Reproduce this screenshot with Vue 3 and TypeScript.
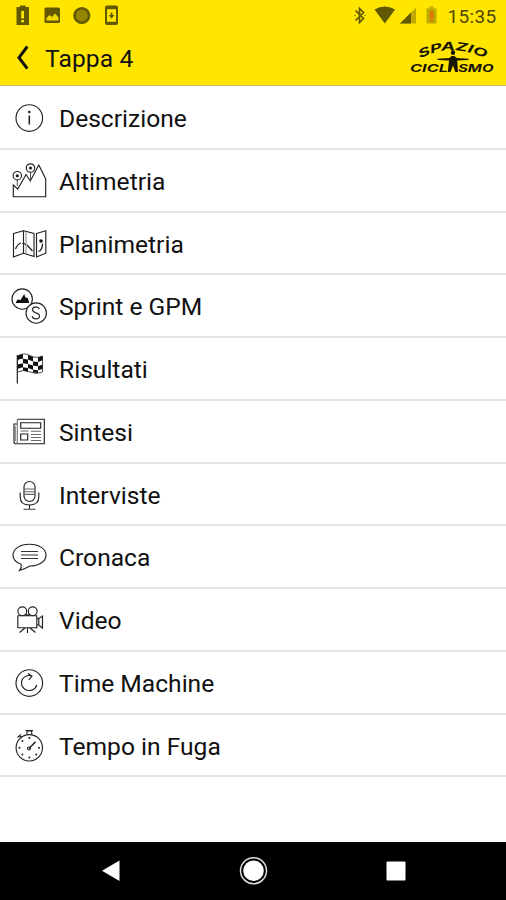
<script setup lang="ts">
interface Item {
  icon: string
  label: string
}

const items: Item[] = [
  { icon: 'info', label: 'Descrizione' },
  { icon: 'altitude', label: 'Altimetria' },
  { icon: 'map', label: 'Planimetria' },
  { icon: 'sprint', label: 'Sprint e GPM' },
  { icon: 'flag', label: 'Risultati' },
  { icon: 'news', label: 'Sintesi' },
  { icon: 'mic', label: 'Interviste' },
  { icon: 'chat', label: 'Cronaca' },
  { icon: 'video', label: 'Video' },
  { icon: 'replay', label: 'Time Machine' },
  { icon: 'stopwatch', label: 'Tempo in Fuga' },
]
</script>

<template>
  <div class="screen">
    <header class="header">
      <div class="status">
        <svg class="status-left" width="130" height="32" viewBox="0 0 130 32">
          <path class="dark" fill-rule="evenodd" d="M16.500 7H20V5.500h5.500V7H29v18H16.500zM21.200 11v7.500h2.800V11zM21.200 20v2.200h2.800V20z" />
          <rect class="dark" x="44.500" y="7.500" width="15.500" height="15.500" rx="1.500" />
          <path class="hole" d="M46.500 20.500v-2.500l3-3 2.500 2 3-3.500 3.500 4v3z" />
          <circle class="ring" cx="81.800" cy="15.500" r="7.300" />
          <path class="dark" fill-rule="evenodd" d="M107 5.500h9q2 0 2 2v15.500q0 2-2 2h-9q-2 0-2-2V7.500q0-2 2-2zM107 9.200v12.600h9V9.200z" />
          <path class="dark" d="M110.800 12.500h1.600v2.500h2.200l-3 3.500-3-3.500h2.200z" />
        </svg>
        <svg class="status-right" width="102" height="32" viewBox="0 0 102 32">
          <path class="bluetooth" d="M11.500 10.500l8 8-4 4V8.500l4 4-8 8M10.500 15.500h1M20.500 15.500h1" />
          <path class="dark" d="M30.500 9.500q10.300-6 20.600 0L40.800 23.500z" />
          <path class="faint" d="M72 7.500V23.500H56z" />
          <path class="dark" d="M67 12.500v11H56z" />
          <path class="faint" d="M82.500 8.500h3V6.500h4v2h3V23.500H82.500z" />
          <path class="alert" d="M86.200 11h3v7h-3zM86.200 19.200h3v2.300h-3z" />
        </svg>
        <span class="clock">15:35</span>
      </div>
      <div class="toolbar">
        <svg class="back" width="32" height="54" viewBox="0 0 32 54">
          <path d="M27.300 14.500L19 25.700l8.300 11" />
        </svg>
        <h1>Tappa 4</h1>
        <svg class="logo" width="106" height="54" viewBox="0 0 106 54">
          <defs><path id="arc" d="M20 24.500Q52 7.500 87 25.500" /></defs>
          <text class="arc-text"><textPath href="#arc" textLength="68" lengthAdjust="spacingAndGlyphs">SPAZIO</textPath></text>
          <text x="10" y="38" textLength="38" lengthAdjust="spacingAndGlyphs">CICL</text>
          <text x="58" y="38" textLength="35.500" lengthAdjust="spacingAndGlyphs">SMO</text>
          <path d="M50.800 18.500a2.200 2.500 0 1 1 4.400 0 2.200 2.500 0 0 1-4.400 0zM37.500 24.800l12-.8 2-2h3l2 2 12 .8v1.200l-11.300.4L58 38h-2.700l-2.300-6.500L50.500 38h-2.700l1.200-11.600-11.500-.4z" />
        </svg>
      </div>
    </header>

    <ul class="list">
      <li v-for="item in items" :key="item.icon">
        <svg class="icon" width="59" height="62" viewBox="0 0 59 62">
          <g v-if="item.icon === 'info'">
            <circle cx="29.300" cy="31" r="13.300" />
            <path d="M29.300 28.500v9" stroke-width="1.600" />
            <circle class="solid" cx="29.300" cy="25" r="1.200" />
          </g>
          <g v-else-if="item.icon === 'altitude'">
            <path d="M13.300 46.700V35l4.500 4 8.200-14.500 4.300 6.500 8.500-16L45.700 29v17.700z" />
            <path d="M17.300 30v6M30.500 22.500v7" stroke-width=".8" />
            <circle cx="17.300" cy="25.700" r="4.200" />
            <circle cx="30.500" cy="18" r="4.200" />
            <circle class="solid" cx="17.300" cy="25.700" r="1.500" />
            <circle class="solid" cx="30.500" cy="18" r="1.500" />
          </g>
          <g v-else-if="item.icon === 'map'">
            <path d="M13.500 20.500l10-2.800v22.500l-10 3.800zM23.500 17.700L34 20.500v23l-10.500-3.300M36.500 20.500l9.300-2.800v22.500L36.500 44zM34 20.500V43" />
            <path d="M26 19v21" stroke="#999" />
            <path d="M15.500 36q2-5 5.500-6M22.500 30l3.500 1.500M27 32l5.500 6M38.500 38.500q4-1.500 4-8" stroke-width="1.300" />
            <circle class="solid" cx="41" cy="28" r="1.800" />
          </g>
          <g v-else-if="item.icon === 'sprint'">
            <circle cx="22.200" cy="24" r="10.200" />
            <path class="solid" d="M15.500 28l2-3.500 3 .5 3.700-6 1.300 3.500 2.300.5 1.500 5z" />
            <circle class="white" cx="36.200" cy="38" r="10.200" />
            <path d="M39.500 34q-1-2.200-3.500-2.200c-4.600 0-4.300 4.700-.7 5.800 5.500 1.400 5.500 6.300.8 6.300q-3.300 0-4-2.800" />
          </g>
          <g v-else-if="item.icon === 'flag'">
            <path d="M17.300 17v28.500" stroke-width="1.200" />
            <path d="M17.500 18q6-4 12.500-.5T42.500 18v16q-6 3-12.500 0t-12.500 0z" stroke-width=".8" />
            <path class="solid" d="M17.500 18q3-2 5.500-1.800v4.600q-3 0-5.500 1.400zM28 17l5 2v4.500l-5-2zM38 19.500l4.500-1.500v4.200L38 24zM23 20.800l5 .7v4.500l-5-.8zM33 23.500l5 .5v4.300l-5-.7zM17.500 26.500l5.500-1.300v4l-5.500 1.500zM28 26l5 1.600v4.200l-5-1.800zM38 28.300l4.500-1.800V31L38 32.300zM23 29.200l5 .8v3.500l-5-1zM33 31.800l5 .5V35l-5-.4z" />
          </g>
          <g v-else-if="item.icon === 'news'">
            <path d="M17.300 18.200h27v24.500H16q-2 0-2-2V23h3.300" />
            <path d="M17.300 18.200v22q0 2.500-2 2.500M15.200 25v15" stroke="#777" />
            <path d="M20.700 21.700h20v5.500h-20zM20.700 33h7v6h-7z" />
            <path d="M20.500 30h8M31 30.200h10M31 33.500h10M31 36.500h10M31 39.500h10" stroke="#666" />
          </g>
          <g v-else-if="item.icon === 'mic'">
            <rect x="24" y="17.500" width="11" height="20" rx="5.500" />
            <path d="M20.200 28.500v4.500q0 8 9.300 8t9.300-8v-4.500M29.500 41v4" />
            <path d="M24 25h11M24 27.700h11M24 30.400h11M23.500 45.300h12" stroke="#666" />
          </g>
          <g v-else-if="item.icon === 'chat'">
            <path d="M19.500 43.500q2.500-3 1.700-6.200C15.700 35.500 13 32 13 28.300 13 22 20 17.200 29.500 17.200S46 22 46 28.300 38.500 39 30 39q-4.500 2.500-10.500 4.500z" />
            <path d="M21 24.500h17M21 28h17M21 31.500h17" stroke="#333" />
          </g>
          <g v-else-if="item.icon === 'video'">
            <circle cx="22.300" cy="22.300" r="4.400" />
            <circle cx="32.700" cy="22.300" r="4.400" />
            <path d="M17.800 26.700h19v12h-19zM36.800 30l2-.5v6.500l-2-.5M38.800 29.500l3.700-2.500v12l-3.700-2.800M25 39l-5.500 4.500M27.500 39v5M30 39l5.500 4.500M25.500 25l2 1.500 2-1.500" />
          </g>
          <g v-else-if="item.icon === 'replay'">
            <circle cx="29.300" cy="31" r="13.300" />
            <path d="M31.500 24q-2-.8-4.200-.2c-7 2-7.500 10-2.300 13.400 4.500 2.800 10.500.7 11.700-4.200" />
            <path d="M28 21.500l4 2.700-3.200 3.600" />
          </g>
          <g v-else>
            <circle cx="29.300" cy="32.800" r="13.200" />
            <path d="M27 19.500V16h4.700v3.500M25.500 15.500h7.500M17.500 22.500l3.500-3.200M19.500 20.500l2.200 2.500" />
            <path d="M29 33.500l6.500-6.800" stroke-width="1.500" />
            <circle cx="29" cy="33.500" r="1.500" />
            <path class="ticks" d="M29.300 23h.01M29.300 42.500h.01M19.500 32.800h.01M39 32.800h.01M22.400 26h.01M22.400 39.600h.01M36.200 39.600h.01" />
          </g>
        </svg>
        <span>{{ item.label }}</span>
      </li>
    </ul>

    <nav class="navbar">
      <svg width="506" height="58" viewBox="0 0 506 58">
        <path d="M119.500 18.500v20.500L102 28.700z" />
        <circle class="home-ring" cx="253.500" cy="28.700" r="13" />
        <circle cx="253.500" cy="28.700" r="10.300" />
        <rect x="386.500" y="19.500" width="19" height="19" rx="1" />
      </svg>
    </nav>
  </div>
</template>

<style>
body {
  margin: 0;
}
</style>

<style scoped>
.screen {
  display: flex;
  flex-direction: column;
  width: 506px;
  height: 900px;
  overflow: hidden;
  background: #fff;
  color: #111;
  font-family: Roboto, "Liberation Sans", sans-serif;
}
.header {
  box-sizing: border-box;
  flex: none;
  height: 86.4px;
  background: #ffe500;
  border-bottom: 1.4px solid #c9b95c;
}
.status {
  display: flex;
  height: 32px;
}
.status svg {
  flex: none;
}
.status-left {
  margin-right: 115px;
}
.status-right {
  margin-left: 99px;
}
.clock {
  flex: 1;
  padding-left: 1.5px;
  color: #504800;
  font-size: 19px;
  line-height: 33px;
  letter-spacing: 0.35px;
}
.dark {
  fill: #625800;
}
.hole {
  fill: #efd900;
}
.ring {
  fill: #948500;
  stroke: #625800;
  stroke-width: 2.6;
}
.faint {
  fill: #bda900;
}
.alert {
  fill: #e46c00;
}
.bluetooth {
  fill: none;
  stroke: #625800;
  stroke-width: 1.7;
}
.toolbar {
  display: flex;
  height: 53px;
}
.back path {
  fill: none;
  stroke: #111;
  stroke-width: 3;
}
h1 {
  flex: 1;
  margin: 0;
  padding-left: 13px;
  font-size: 24.6px;
  font-weight: 400;
  line-height: 54px;
  letter-spacing: 0.1px;
}
.logo {
  margin-top: 2px;
  fill: #171400;
  font: italic 700 10.500px Inter, "DejaVu Sans", sans-serif;
}
.arc-text {
  font-size: 11.500px;
}
.list {
  flex: 1;
  margin: 0;
  padding: 0.6px 0 0;
  list-style: none;
}
li {
  box-sizing: border-box;
  display: flex;
  height: 62.780px;
  border-bottom: 2px solid #e4e4e4;
  font-size: 24.6px;
  line-height: 64px;
  letter-spacing: 0;
}
.icon {
  flex: none;
  margin-top: 0.2px;
  fill: none;
  stroke: #222;
  stroke-width: 1.150;
}
.solid {
  fill: #111;
  stroke: none;
}
.white {
  fill: #fff;
}
.ticks {
  stroke-width: 2;
  stroke-linecap: round;
}
.navbar {
  flex: none;
  height: 58px;
  background: #000;
}
.navbar svg {
  display: block;
  fill: #fff;
}
.navbar .home-ring {
  fill: none;
  stroke: #ddd;
  stroke-width: 1.5;
}
</style>
